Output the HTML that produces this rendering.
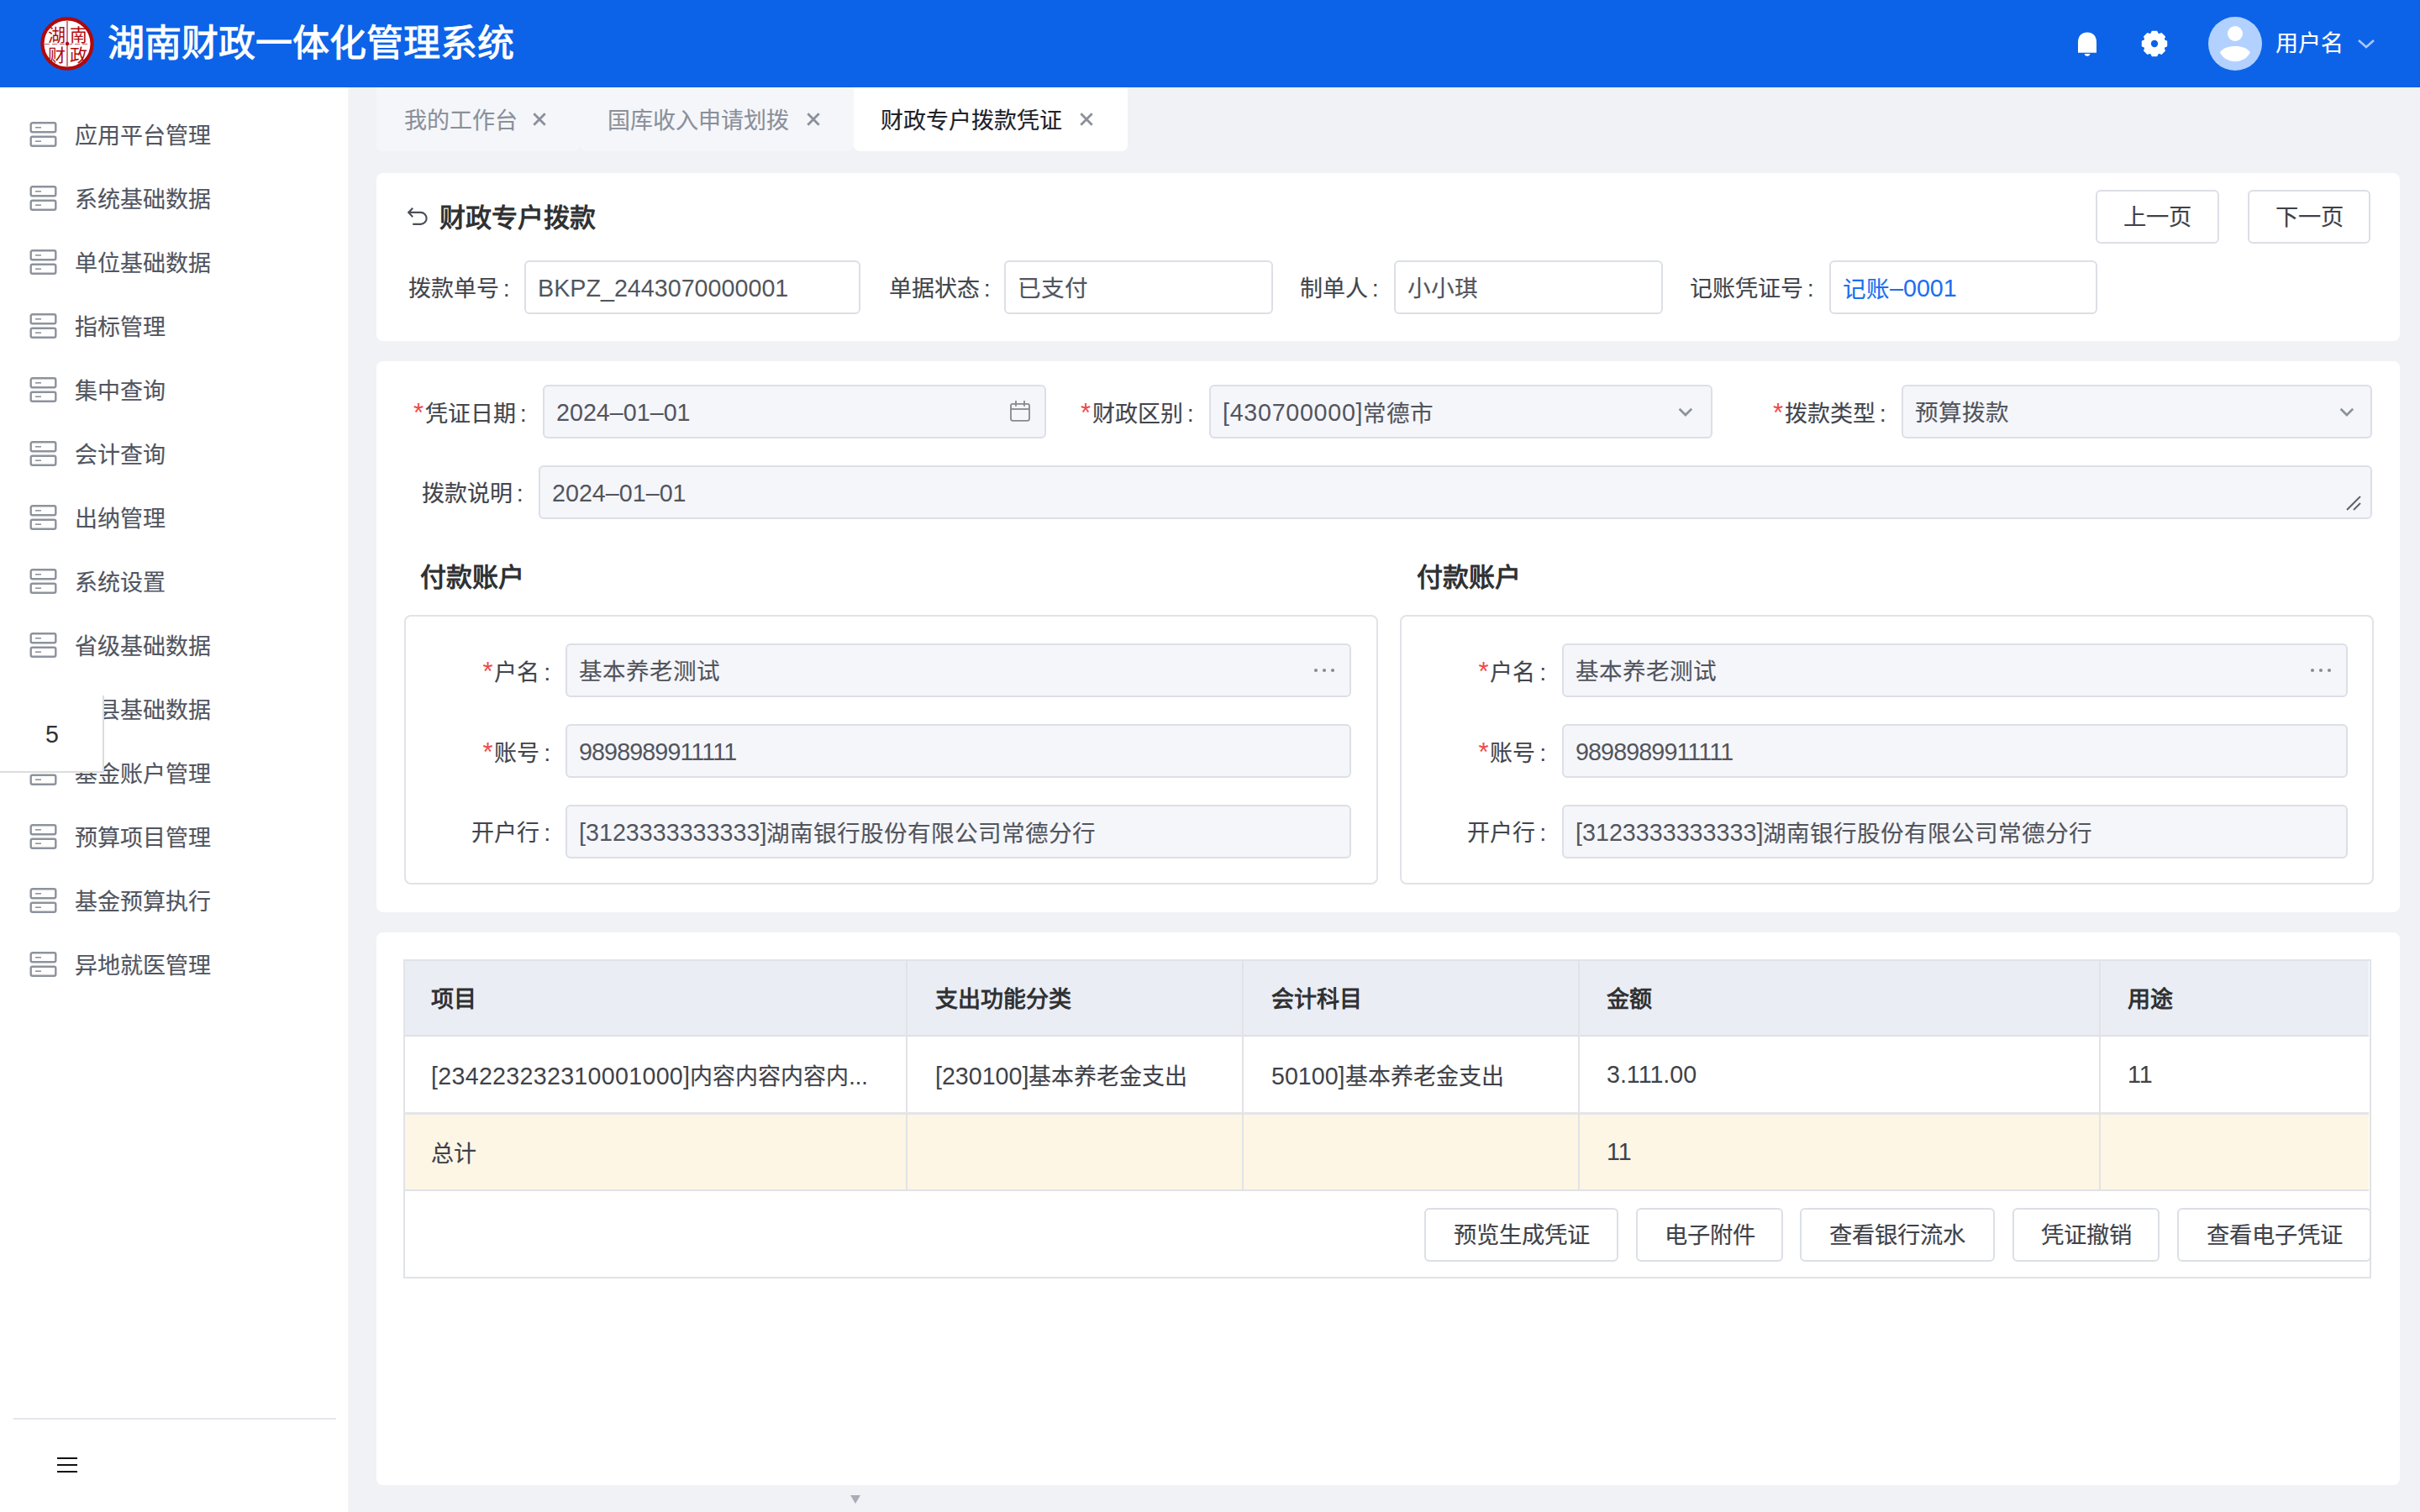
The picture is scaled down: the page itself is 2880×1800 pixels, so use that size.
<!DOCTYPE html>
<html lang="zh-CN"><head><meta charset="utf-8">
<style>
*{box-sizing:border-box;margin:0;padding:0}
html,body{width:2880px;height:1800px;overflow:hidden}
body{position:relative;background:#f0f2f5;-webkit-text-stroke:0.15px currentColor;font-family:"Liberation Sans",sans-serif;color:#4b4e57;font-size:27px}
.a{position:absolute}
.hdr{left:0;top:0;width:2880px;height:104px;background:#0d63e8}
.side{left:0;top:104px;width:414px;height:1696px;background:#fff}
.mi{position:absolute;left:0;width:414px;height:76px}
.mi svg{position:absolute;left:35px;top:23px}
.mi span{position:absolute;left:89px;top:2px;line-height:76px;font-size:27px;color:#51555f;white-space:nowrap}
.tab{position:absolute;top:104px;height:76px;background:#f5f6fa;border-radius:0 0 7px 7px;font-size:27px;color:#8a9099}
.tab span{position:absolute;top:3.5px;line-height:72px;white-space:nowrap}
.tab svg{position:absolute;top:134px}
.card{position:absolute;left:448px;width:2408px;background:#fff;border-radius:8px}
.lbl{position:absolute;white-space:nowrap;font-size:27px;color:#42454c;line-height:62px;margin-top:3px}
.l{-webkit-text-stroke:0;font-size:106%}
.inp .l{font-size:104%;position:relative;top:-1px}
.req{-webkit-text-stroke:0;color:#f04848;font-size:31px;margin-right:2px}
i{font-style:normal;margin-left:5px}
.inp{position:absolute;height:64px;border:2px solid #dcdfe6;border-radius:6px;background:#fff;white-space:nowrap;font-size:27.6px;line-height:64px;padding-left:14px;color:#52555d;overflow:hidden}
.gray{background:#f5f6fa}
.btn{position:absolute;height:64px;border:2px solid #dcdfe6;border-radius:6px;background:#fff;font-size:27.3px;color:#3f4249;line-height:62px;text-align:center;white-space:nowrap}
.sec{-webkit-text-stroke:0;position:absolute;font-size:31px;font-weight:bold;color:#303133;white-space:nowrap;line-height:40px}
.acct{position:absolute;top:732px;width:1159px;height:321px;border:2px solid #e0e3e8;border-radius:8px}
.cell{position:absolute;white-space:nowrap;font-size:27px;color:#3f4249}
</style></head><body>
<!-- header -->
<div class="a hdr">
  <svg class="a" style="left:46px;top:18px" width="68" height="68" viewBox="0 0 68 68">
    <circle cx="34" cy="34" r="29.6" fill="#fff" stroke="#b0090c" stroke-width="4.2"/>
    <line x1="34" y1="7" x2="34" y2="61" stroke="#b0090c" stroke-width="1.1"/>
    <line x1="7" y1="34.5" x2="61" y2="34.5" stroke="#c03030" stroke-width="0.8" stroke-dasharray="6 3"/>
    <circle cx="34" cy="34" r="2.2" fill="#b0090c"/>
    <g fill="#b0090c" font-size="21" text-anchor="middle" style="-webkit-text-stroke:0.5px #b0090c">
    <text x="21" y="31">湖</text><text x="47" y="31">南</text><text x="21" y="55">财</text><text x="47" y="55">政</text></g>
  </svg>
  <div class="a" style="left:128px;top:22px;font-size:44px;line-height:60px;color:#fff;font-weight:500;-webkit-text-stroke:1px #fff;white-space:nowrap">湖南财政一体化管理系统</div>
  <!-- bell -->
  <svg class="a" style="left:2470px;top:36px" width="28" height="34" viewBox="0 0 28 34">
    <path d="M3 26.8 V14 C3 7 7.5 2.6 14 2.6 C20.5 2.6 25 7 25 14 V26.8 Z" fill="#fff"/>
    <path d="M10.7 28 H17.4 A3.4 3.4 0 0 1 10.7 28 Z" fill="#fff"/>
  </svg>
  <!-- gear -->
  <svg class="a" style="left:2548px;top:36px" width="32" height="32" viewBox="0 0 32 32">
    <path d="M12.21 3.98 L13.18 1.47 L18.82 1.47 L19.79 3.98 L21.82 4.82 L24.28 3.73 L28.27 7.72 L27.18 10.18 L28.02 12.21 L30.53 13.18 L30.53 18.82 L28.02 19.79 L27.18 21.82 L28.27 24.28 L24.28 28.27 L21.82 27.18 L19.79 28.02 L18.82 30.53 L13.18 30.53 L12.21 28.02 L10.18 27.18 L7.72 28.27 L3.73 24.28 L4.82 21.82 L3.98 19.79 L1.47 18.82 L1.47 13.18 L3.98 12.21 L4.82 10.18 L3.73 7.72 L7.72 3.73 L10.18 4.82 Z" fill="#fff" stroke="#fff" stroke-width="1.4" stroke-linejoin="round"/>
    <circle cx="16" cy="16" r="4.2" fill="#0d63e8"/>
  </svg>
  <!-- avatar -->
  <svg class="a" style="left:2628px;top:20px" width="64" height="64" viewBox="0 0 64 64">
    <circle cx="32" cy="32" r="32" fill="#b3d1ff"/>
    <circle cx="32" cy="20" r="9" fill="#fff"/>
    <path d="M13.8 42.3 C20 32.5 44 32.5 50 42.3 C43 56.8 21 56.8 13.8 42.3 Z" fill="#fff"/>
  </svg>
  <div class="a" style="left:2708px;top:32px;font-size:27px;line-height:40px;color:#fff;white-space:nowrap">用户名</div>
  <svg class="a" style="left:2805px;top:45px" width="22" height="14" viewBox="0 0 22 14"><path d="M2 3 L11 11 L20 3" fill="none" stroke="#a9c8ff" stroke-width="2.5"/></svg>
</div>

<!-- sidebar -->
<div class="a side"></div>
<div class="mi" style="top:122px"><svg width="34" height="32" viewBox="0 0 34 32"><g fill="none" stroke="#8d939c" stroke-width="2.4"><rect x="1.7" y="1.2" width="29.6" height="11" rx="2"/><rect x="1.7" y="17.7" width="29.6" height="11" rx="2"/></g><g stroke="#8d939c" stroke-width="1.6"><line x1="7" y1="6.8" x2="14" y2="6.8"/><line x1="7" y1="23.2" x2="14" y2="23.2"/></g></svg><span>应用平台管理</span></div>
<div class="mi" style="top:198px"><svg width="34" height="32" viewBox="0 0 34 32"><g fill="none" stroke="#8d939c" stroke-width="2.4"><rect x="1.7" y="1.2" width="29.6" height="11" rx="2"/><rect x="1.7" y="17.7" width="29.6" height="11" rx="2"/></g><g stroke="#8d939c" stroke-width="1.6"><line x1="7" y1="6.8" x2="14" y2="6.8"/><line x1="7" y1="23.2" x2="14" y2="23.2"/></g></svg><span>系统基础数据</span></div>
<div class="mi" style="top:274px"><svg width="34" height="32" viewBox="0 0 34 32"><g fill="none" stroke="#8d939c" stroke-width="2.4"><rect x="1.7" y="1.2" width="29.6" height="11" rx="2"/><rect x="1.7" y="17.7" width="29.6" height="11" rx="2"/></g><g stroke="#8d939c" stroke-width="1.6"><line x1="7" y1="6.8" x2="14" y2="6.8"/><line x1="7" y1="23.2" x2="14" y2="23.2"/></g></svg><span>单位基础数据</span></div>
<div class="mi" style="top:350px"><svg width="34" height="32" viewBox="0 0 34 32"><g fill="none" stroke="#8d939c" stroke-width="2.4"><rect x="1.7" y="1.2" width="29.6" height="11" rx="2"/><rect x="1.7" y="17.7" width="29.6" height="11" rx="2"/></g><g stroke="#8d939c" stroke-width="1.6"><line x1="7" y1="6.8" x2="14" y2="6.8"/><line x1="7" y1="23.2" x2="14" y2="23.2"/></g></svg><span>指标管理</span></div>
<div class="mi" style="top:426px"><svg width="34" height="32" viewBox="0 0 34 32"><g fill="none" stroke="#8d939c" stroke-width="2.4"><rect x="1.7" y="1.2" width="29.6" height="11" rx="2"/><rect x="1.7" y="17.7" width="29.6" height="11" rx="2"/></g><g stroke="#8d939c" stroke-width="1.6"><line x1="7" y1="6.8" x2="14" y2="6.8"/><line x1="7" y1="23.2" x2="14" y2="23.2"/></g></svg><span>集中查询</span></div>
<div class="mi" style="top:502px"><svg width="34" height="32" viewBox="0 0 34 32"><g fill="none" stroke="#8d939c" stroke-width="2.4"><rect x="1.7" y="1.2" width="29.6" height="11" rx="2"/><rect x="1.7" y="17.7" width="29.6" height="11" rx="2"/></g><g stroke="#8d939c" stroke-width="1.6"><line x1="7" y1="6.8" x2="14" y2="6.8"/><line x1="7" y1="23.2" x2="14" y2="23.2"/></g></svg><span>会计查询</span></div>
<div class="mi" style="top:578px"><svg width="34" height="32" viewBox="0 0 34 32"><g fill="none" stroke="#8d939c" stroke-width="2.4"><rect x="1.7" y="1.2" width="29.6" height="11" rx="2"/><rect x="1.7" y="17.7" width="29.6" height="11" rx="2"/></g><g stroke="#8d939c" stroke-width="1.6"><line x1="7" y1="6.8" x2="14" y2="6.8"/><line x1="7" y1="23.2" x2="14" y2="23.2"/></g></svg><span>出纳管理</span></div>
<div class="mi" style="top:654px"><svg width="34" height="32" viewBox="0 0 34 32"><g fill="none" stroke="#8d939c" stroke-width="2.4"><rect x="1.7" y="1.2" width="29.6" height="11" rx="2"/><rect x="1.7" y="17.7" width="29.6" height="11" rx="2"/></g><g stroke="#8d939c" stroke-width="1.6"><line x1="7" y1="6.8" x2="14" y2="6.8"/><line x1="7" y1="23.2" x2="14" y2="23.2"/></g></svg><span>系统设置</span></div>
<div class="mi" style="top:730px"><svg width="34" height="32" viewBox="0 0 34 32"><g fill="none" stroke="#8d939c" stroke-width="2.4"><rect x="1.7" y="1.2" width="29.6" height="11" rx="2"/><rect x="1.7" y="17.7" width="29.6" height="11" rx="2"/></g><g stroke="#8d939c" stroke-width="1.6"><line x1="7" y1="6.8" x2="14" y2="6.8"/><line x1="7" y1="23.2" x2="14" y2="23.2"/></g></svg><span>省级基础数据</span></div>
<div class="mi" style="top:806px"><svg width="34" height="32" viewBox="0 0 34 32"><g fill="none" stroke="#8d939c" stroke-width="2.4"><rect x="1.7" y="1.2" width="29.6" height="11" rx="2"/><rect x="1.7" y="17.7" width="29.6" height="11" rx="2"/></g><g stroke="#8d939c" stroke-width="1.6"><line x1="7" y1="6.8" x2="14" y2="6.8"/><line x1="7" y1="23.2" x2="14" y2="23.2"/></g></svg><span>市县基础数据</span></div>
<div class="mi" style="top:882px"><svg width="34" height="32" viewBox="0 0 34 32"><g fill="none" stroke="#8d939c" stroke-width="2.4"><rect x="1.7" y="1.2" width="29.6" height="11" rx="2"/><rect x="1.7" y="17.7" width="29.6" height="11" rx="2"/></g><g stroke="#8d939c" stroke-width="1.6"><line x1="7" y1="6.8" x2="14" y2="6.8"/><line x1="7" y1="23.2" x2="14" y2="23.2"/></g></svg><span>基金账户管理</span></div>
<div class="mi" style="top:958px"><svg width="34" height="32" viewBox="0 0 34 32"><g fill="none" stroke="#8d939c" stroke-width="2.4"><rect x="1.7" y="1.2" width="29.6" height="11" rx="2"/><rect x="1.7" y="17.7" width="29.6" height="11" rx="2"/></g><g stroke="#8d939c" stroke-width="1.6"><line x1="7" y1="6.8" x2="14" y2="6.8"/><line x1="7" y1="23.2" x2="14" y2="23.2"/></g></svg><span>预算项目管理</span></div>
<div class="mi" style="top:1034px"><svg width="34" height="32" viewBox="0 0 34 32"><g fill="none" stroke="#8d939c" stroke-width="2.4"><rect x="1.7" y="1.2" width="29.6" height="11" rx="2"/><rect x="1.7" y="17.7" width="29.6" height="11" rx="2"/></g><g stroke="#8d939c" stroke-width="1.6"><line x1="7" y1="6.8" x2="14" y2="6.8"/><line x1="7" y1="23.2" x2="14" y2="23.2"/></g></svg><span>基金预算执行</span></div>
<div class="mi" style="top:1110px"><svg width="34" height="32" viewBox="0 0 34 32"><g fill="none" stroke="#8d939c" stroke-width="2.4"><rect x="1.7" y="1.2" width="29.6" height="11" rx="2"/><rect x="1.7" y="17.7" width="29.6" height="11" rx="2"/></g><g stroke="#8d939c" stroke-width="1.6"><line x1="7" y1="6.8" x2="14" y2="6.8"/><line x1="7" y1="23.2" x2="14" y2="23.2"/></g></svg><span>异地就医管理</span></div>
<div class="a" style="left:0;top:828px;width:124px;height:92px;background:#fff;border-right:2px solid #dcdcdc;border-bottom:2px solid #dcdcdc"><div class="a" style="left:54px;top:26px;font-size:27px;line-height:40px;color:#303133"><span class="l">5</span></div></div>
<div class="a" style="left:16px;top:1688px;width:384px;height:2px;background:#e5e6eb"></div>
<svg class="a" style="left:67px;top:1734px" width="26" height="20" viewBox="0 0 26 20"><g stroke="#111" stroke-width="2"><line x1="1" y1="2" x2="25" y2="2"/><line x1="1" y1="10" x2="25" y2="10"/><line x1="1" y1="18" x2="25" y2="18"/></g></svg>
<div class="a" style="left:414px;top:104px;width:2px;height:1696px;background:#f4f4f5"></div>



<!-- tabs -->
<div class="tab" style="left:448px;width:242px"><span style="left:33px">我的工作台</span><svg class="a" style="left:186px;top:30px" width="16" height="16" viewBox="0 0 16 16"><path d="M1.3 1.3 L14.7 14.7 M14.7 1.3 L1.3 14.7" stroke="#8a9099" stroke-width="2.8"/></svg></div>
<div class="tab" style="left:690px;width:326px"><span style="left:33px">国库收入申请划拨</span><svg class="a" style="left:270px;top:30px" width="16" height="16" viewBox="0 0 16 16"><path d="M1.3 1.3 L14.7 14.7 M14.7 1.3 L1.3 14.7" stroke="#8a9099" stroke-width="2.8"/></svg></div>
<div class="tab" style="left:1016px;width:326px;background:#fff;color:#1d2129"><span style="left:32px">财政专户拨款凭证</span><svg class="a" style="left:269px;top:30px" width="16" height="16" viewBox="0 0 16 16"><path d="M1.3 1.3 L14.7 14.7 M14.7 1.3 L1.3 14.7" stroke="#8a9099" stroke-width="2.8"/></svg></div>

<!-- card 1 -->
<div class="card" style="top:206px;height:200px"></div>
<svg class="a" style="left:485px;top:246px" width="26" height="24" viewBox="0 0 26 24"><path d="M6.2 1.8 L1.2 6.9 L6.2 12.2 M1.2 6.9 H15.6 A7 7 0 0 1 15.6 20.9 H6.2" fill="none" stroke="#4b4e57" stroke-width="2.1"/></svg>
<div class="sec" style="left:523px;top:240px">财政专户拨款</div>
<div class="btn" style="left:2494px;top:226px;width:147px">上一页</div>
<div class="btn" style="left:2675px;top:226px;width:146px">下一页</div>
<div class="lbl" style="left:486px;top:310px">拨款单号<i>:</i></div>
<div class="inp" style="left:624px;top:310px;width:400px"><span class="l">BKPZ_2443070000001</span></div>
<div class="lbl" style="left:1058px;top:310px">单据状态<i>:</i></div>
<div class="inp" style="left:1195px;top:310px;width:320px">已支付</div>
<div class="lbl" style="left:1547px;top:310px">制单人<i>:</i></div>
<div class="inp" style="left:1659px;top:310px;width:320px">小小琪</div>
<div class="lbl" style="left:2011px;top:310px">记账凭证号<i>:</i></div>
<div class="inp" style="left:2177px;top:310px;width:319px;color:#1a6ff0">记账<span class="l">–0001</span></div>

<!-- card 2 -->
<div class="card" style="top:430px;height:656px"></div>
<div class="lbl" style="left:492px;top:458px"><span class="req">*</span>凭证日期<i>:</i></div>
<div class="inp gray" style="left:646px;top:458px;width:599px"><span class="l">2024–01–01</span></div>
<svg class="a" style="left:1199px;top:475px" width="30" height="30" viewBox="0 0 30 30"><g fill="none" stroke="#87898c" stroke-width="1.8"><rect x="4" y="5.9" width="22" height="19.9" rx="2.2"/><line x1="4" y1="12" x2="26" y2="12"/><line x1="10" y1="2" x2="10" y2="8.8"/><line x1="20" y1="2" x2="20" y2="8.8"/></g></svg>
<div class="lbl" style="left:1286px;top:458px"><span class="req">*</span>财政区别<i>:</i></div>
<div class="inp gray" style="left:1439px;top:458px;width:599px"><span class="l" style="letter-spacing:0.7px">[430700000]</span>常德市</div>
<svg class="a" style="left:1994px;top:482px" width="22" height="16" viewBox="0 0 22 16"><path d="M4.6 4.8 L11.9 12 L19.2 4.8" fill="none" stroke="#8d939c" stroke-width="2.7"/></svg>
<div class="lbl" style="left:2110px;top:458px"><span class="req">*</span>拨款类型<i>:</i></div>
<div class="inp gray" style="left:2263px;top:458px;width:560px">预算拨款</div>
<svg class="a" style="left:2781px;top:482px" width="22" height="16" viewBox="0 0 22 16"><path d="M4.6 4.8 L11.9 12 L19.2 4.8" fill="none" stroke="#8d939c" stroke-width="2.7"/></svg>
<div class="lbl" style="left:502px;top:554px">拨款说明<i>:</i></div>
<div class="inp gray" style="left:641px;top:554px;width:2182px"><span class="l">2024–01–01</span></div>
<svg class="a" style="left:2790px;top:588px" width="22" height="22" viewBox="0 0 22 22"><g stroke="#5e636e" stroke-width="2"><line x1="3" y1="19" x2="19" y2="3"/><line x1="11" y1="19" x2="19" y2="11"/></g></svg>

<div class="sec" style="left:500px;top:668px">付款账户</div>
<div class="sec" style="left:1686px;top:668px">付款账户</div>
<div class="acct" style="left:481px"></div>
<div class="lbl" style="left:481px;width:174px;text-align:right;top:766px"><span class="req">*</span>户名<i>:</i></div>
<div class="inp gray" style="left:673px;top:766px;width:935px">基本养老测试</div>
<div class="lbl" style="left:481px;width:174px;text-align:right;top:862px"><span class="req">*</span>账号<i>:</i></div>
<div class="inp gray" style="left:673px;top:862px;width:935px"><span class="l" style="letter-spacing:-0.9px">9898989911111</span></div>
<div class="lbl" style="left:481px;width:174px;text-align:right;top:958px">开户行<i>:</i></div>
<div class="inp gray" style="left:673px;top:958px;width:935px"><span class="l">[3123333333333]</span>湖南银行股份有限公司常德分行</div>
<svg class="a" style="left:1563px;top:794px" width="28" height="8" viewBox="0 0 28 8"><g fill="#8c8c8c"><circle cx="3" cy="4" r="2.1"/><circle cx="13" cy="4" r="2.1"/><circle cx="23" cy="4" r="2.1"/></g></svg>
<div class="acct" style="left:1666px"></div>
<div class="lbl" style="left:1666px;width:174px;text-align:right;top:766px"><span class="req">*</span>户名<i>:</i></div>
<div class="inp gray" style="left:1859px;top:766px;width:935px">基本养老测试</div>
<div class="lbl" style="left:1666px;width:174px;text-align:right;top:862px"><span class="req">*</span>账号<i>:</i></div>
<div class="inp gray" style="left:1859px;top:862px;width:935px"><span class="l" style="letter-spacing:-0.9px">9898989911111</span></div>
<div class="lbl" style="left:1666px;width:174px;text-align:right;top:958px">开户行<i>:</i></div>
<div class="inp gray" style="left:1859px;top:958px;width:935px"><span class="l">[3123333333333]</span>湖南银行股份有限公司常德分行</div>
<svg class="a" style="left:2749px;top:794px" width="28" height="8" viewBox="0 0 28 8"><g fill="#8c8c8c"><circle cx="3" cy="4" r="2.1"/><circle cx="13" cy="4" r="2.1"/><circle cx="23" cy="4" r="2.1"/></g></svg>

<!-- card 3 -->
<div class="card" style="top:1110px;height:658px"></div>
<div class="a" style="left:480px;top:1142px;width:2342px;height:380px;border:2px solid #e0e3e8"></div>
<div class="a" style="left:482px;top:1144px;width:2337px;height:88px;background:#eaedf4"></div>
<div class="a" style="left:482px;top:1232px;width:2337px;height:2px;background:#dde0e5"></div>
<div class="a" style="left:482px;top:1324px;width:2337px;height:3px;background:#e4e5e8"></div>
<div class="a" style="left:482px;top:1327px;width:2337px;height:89px;background:#fdf6e4"></div>
<div class="a" style="left:482px;top:1416px;width:2337px;height:2px;background:#e0e3e8"></div>
<div class="a" style="left:1078px;top:1144px;width:2px;height:272px;background:#e2e3e6"></div>
<div class="a" style="left:1478px;top:1144px;width:2px;height:272px;background:#e2e3e6"></div>
<div class="a" style="left:1878px;top:1144px;width:2px;height:272px;background:#e2e3e6"></div>
<div class="a" style="left:2498px;top:1144px;width:2px;height:272px;background:#e2e3e6"></div>
<div class="cell" style="left:513px;top:1168px;font-weight:bold;color:#303133;-webkit-text-stroke:0">项目</div>
<div class="cell" style="left:1113px;top:1168px;font-weight:bold;color:#303133;-webkit-text-stroke:0">支出功能分类</div>
<div class="cell" style="left:1513px;top:1168px;font-weight:bold;color:#303133;-webkit-text-stroke:0">会计科目</div>
<div class="cell" style="left:1912px;top:1168px;font-weight:bold;color:#303133;-webkit-text-stroke:0">金额</div>
<div class="cell" style="left:2532px;top:1168px;font-weight:bold;color:#303133;-webkit-text-stroke:0">用途</div>
<div class="cell" style="left:513px;top:1260px"><span class="l" style="letter-spacing:0.3px">[234223232310001000]</span>内容内容内容内...</div>
<div class="cell" style="left:1113px;top:1260px"><span class="l">[230100]</span>基本养老金支出</div>
<div class="cell" style="left:1513px;top:1260px"><span class="l">50100]</span>基本养老金支出</div>
<div class="cell" style="left:1912px;top:1263px"><span class="l">3.111.00</span></div>
<div class="cell" style="left:2532px;top:1263px"><span class="l">11</span></div>
<div class="cell" style="left:513px;top:1352px">总计</div>
<div class="cell" style="left:1912px;top:1355px"><span class="l">11</span></div>
<div class="btn" style="left:1695px;top:1438px;width:231px;height:64px">预览生成凭证</div>
<div class="btn" style="left:1947px;top:1438px;width:175px;height:64px">电子附件</div>
<div class="btn" style="left:2142px;top:1438px;width:232px;height:64px">查看银行流水</div>
<div class="btn" style="left:2395px;top:1438px;width:175px;height:64px">凭证撤销</div>
<div class="btn" style="left:2591px;top:1438px;width:231px;height:64px">查看电子凭证</div>
<svg class="a" style="left:1012px;top:1780px" width="12" height="10" viewBox="0 0 12 10"><path d="M0 0 H12 L6 10 Z" fill="#a8adb7"/></svg>
</body></html>
